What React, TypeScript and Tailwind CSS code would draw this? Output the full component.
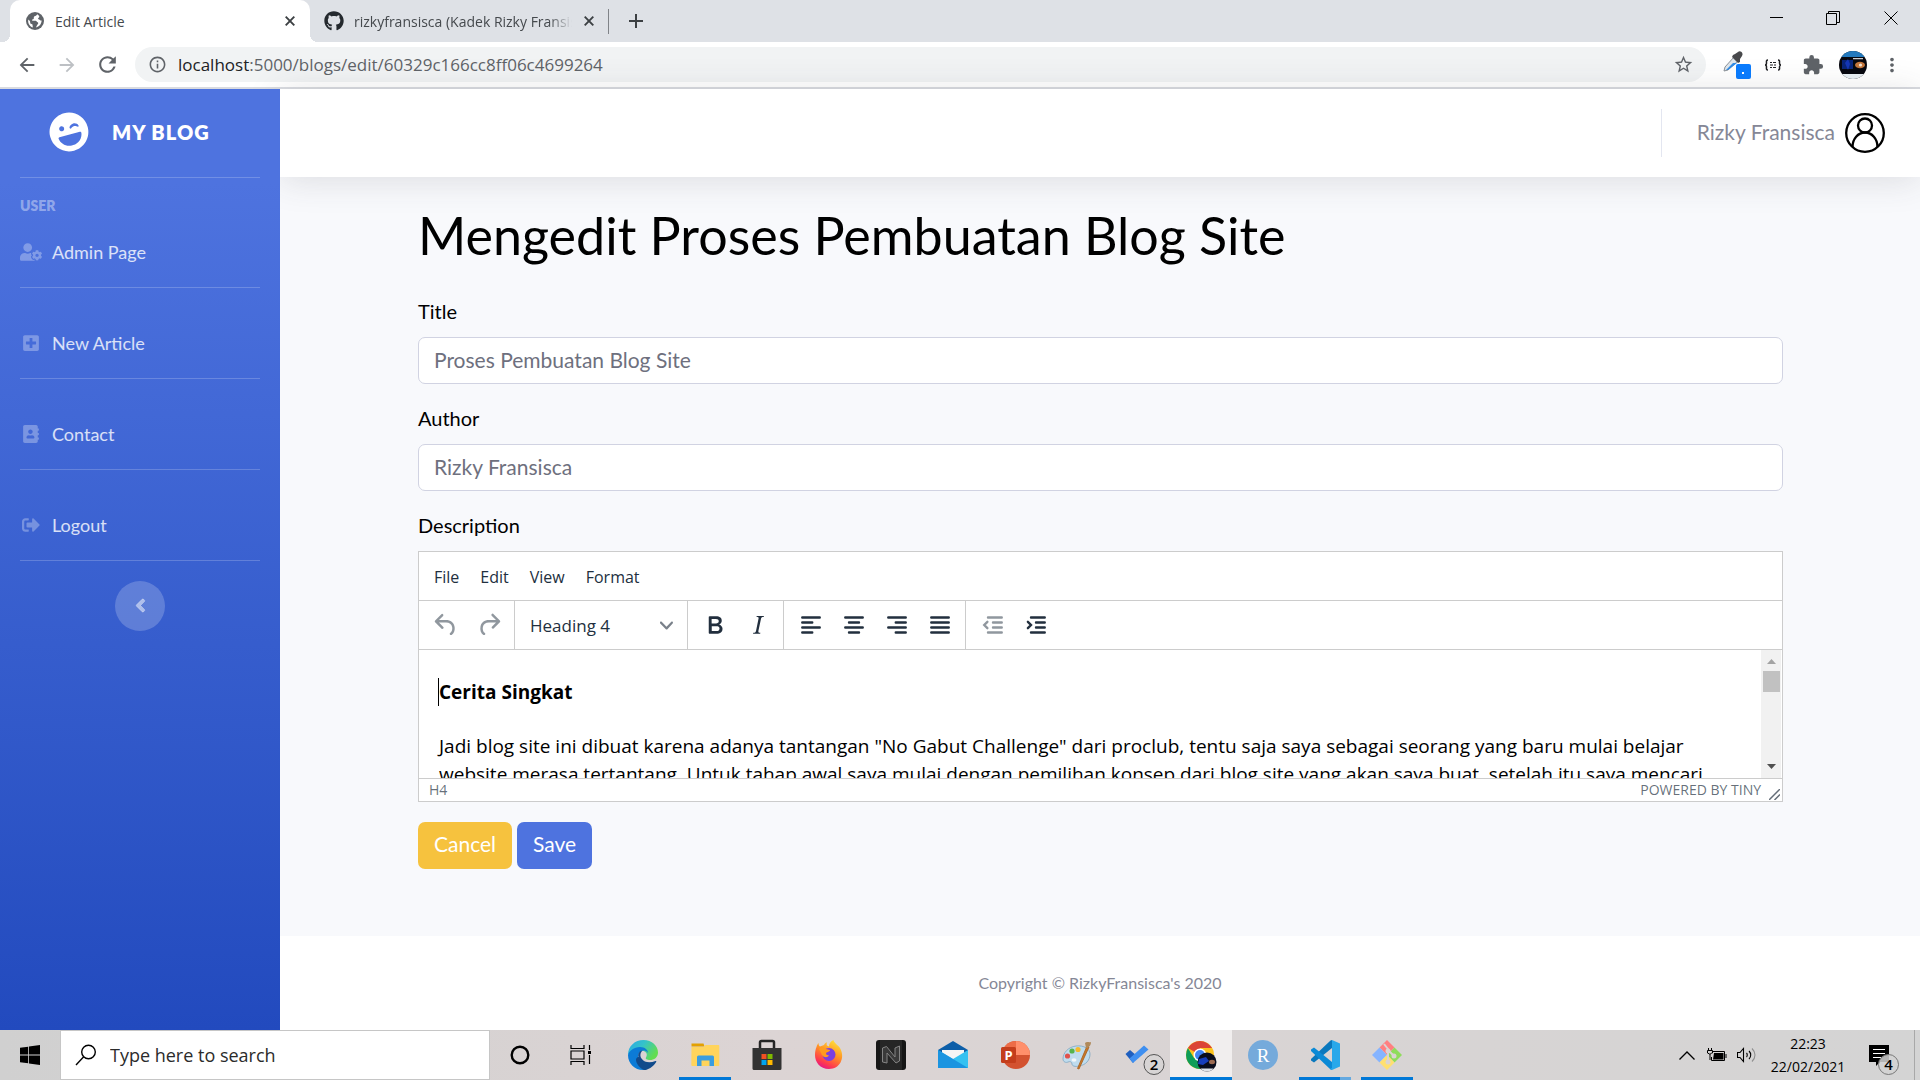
import type { ReactNode } from "react";
import {
  FaAddressBook,
  FaAngleLeft,
  FaGithub,
  FaLaughWink,
  FaPlusSquare,
  FaSignOutAlt,
  FaUserCog,
} from "react-icons/fa";
import {
  MdArrowBack,
  MdArrowForward,
  MdExtension,
  MdInfoOutline,
  MdMoreVert,
  MdRefresh,
  MdStarBorder,
} from "react-icons/md";

/* ---------- Browser chrome ---------- */

function CloseGlyph() {
  return (
    <svg viewBox="0 0 10 10" className="size-[10px]" stroke="#3c4043" strokeWidth="1.9">
      <path d="M.7.7l8.6 8.6M9.3.7L.7 9.3" />
    </svg>
  );
}

function GlobeIcon() {
  return (
    <svg viewBox="0 0 18 18" className="size-[18px] shrink-0">
      <circle cx="9" cy="9" r="9" fill="#5f6368" />
      <path
        d="M11.500 2.200c-1 .3-1 1.600-2.300 1.800-1.200.2-1.400 1-1.400 1.900 0 1-.3 1.400-1.300 1.500-.9.1-.6 1.200.2 1.300h3c1 .1 1 1.300 1.900 1.600.8.3.8 1.400.1 2-.9.700-.9 2-1.800 3.100 3.400-.6 5.700-3.500 5.700-6.800-.8 0-1.600-.3-2-.9-.4-.6-1.400-.2-1.500-1-.1-.9 1.200-1.200 1.200-2.200 0-.8-.9-1.300-1.800-2.300zM2.300 7.600c-.7 3.400 1.100 6.800 4.400 7.900.4-.8-.2-1.500-.1-2.300.1-.9-.9-1.200-1.700-1.400-.9-.2-.6-1.300-.8-2-.2-.9-1.100-1.400-1.800-2.200z"
        fill="#fff"
      />
    </svg>
  );
}

function TabStrip() {
  return (
    <div className="flex h-[42px] items-stretch bg-[#dee1e6] pl-[10px]">
      <div className="relative flex w-[300px] items-center rounded-t-[10px] bg-white pr-3 pl-4">
        <span className="absolute bottom-0 -left-2 size-2 bg-[radial-gradient(circle_at_0_0,#dee1e6_8px,white_8px)]" />
        <span className="absolute -right-2 bottom-0 size-2 bg-[radial-gradient(circle_at_100%_0,#dee1e6_8px,white_8px)]" />
        <GlobeIcon />
        <span className="ml-[11px] flex-1 text-[14px] text-[#45494d]">Edit Article</span>
        <button aria-label="Close tab" className="p-[3px]">
          <CloseGlyph />
        </button>
      </div>
      <div className="flex items-center pl-[14px]">
        <FaGithub className="size-5 shrink-0 text-[#24292e]" />
        <span className="ml-[10px] w-[219px] overflow-hidden text-[14px] whitespace-nowrap text-[#45494d] [mask-image:linear-gradient(to_right,black_195px,transparent_218px)]">
          rizkyfransisca (Kadek Rizky Fransisca)
        </span>
        <button aria-label="Close tab" className="ml-2 p-[3px]">
          <CloseGlyph />
        </button>
        <span className="ml-[11px] h-[25px] w-px bg-[#808388]" />
        <button aria-label="New tab" className="ml-5">
          <svg viewBox="0 0 14 14" className="size-[14px]" stroke="#3c4043" strokeWidth="2">
            <path d="M7 0v14M0 7h14" />
          </svg>
        </button>
      </div>
      <div className="ml-auto flex items-start pt-[11px] pr-[22px]">
        <button aria-label="Minimize" className="mr-[42px]">
          <svg viewBox="0 0 14 14" className="size-[14px]" stroke="#000">
            <path d="M0 6.500h13" />
          </svg>
        </button>
        <button aria-label="Restore" className="mr-[44px]">
          <svg viewBox="0 0 14 14" className="size-[14px]" fill="none" stroke="#000">
            <path d="M.5 2.500h10v11H.5zM2.500 2V.5h11v11H11" />
          </svg>
        </button>
        <button aria-label="Close">
          <svg viewBox="0 0 14 14" className="size-[14px]" stroke="#000">
            <path d="M.5.5l13 13M13.500.5l-13 13" />
          </svg>
        </button>
      </div>
    </div>
  );
}

function ProfilePhoto({ className }: { className: string }) {
  return (
    <svg viewBox="0 0 28 28" className={className}>
      <defs>
        <clipPath id="photo">
          <circle cx="14" cy="14" r="14" />
        </clipPath>
      </defs>
      <g clipPath="url(#photo)">
        <path fill="#07080f" d="M0 0h28v28H0z" />
        <path fill="#2379bd" d="M0 0h28v6H0z" />
        <path fill="#0b2f9e" d="M3 9h11v9H3z" opacity=".75" />
        <path fill="#1b3fd0" d="M6 12l3-4 2 5-2 6z" opacity=".7" />
        <ellipse cx="21" cy="14" rx="5" ry="3.200" fill="#c4763c" />
        <circle cx="21.500" cy="14" r="1.600" fill="#f4e8d8" />
        <path fill="#fff" d="M14 7h10v1.200H14z" opacity=".8" />
        <path fill="#e9f0f5" d="M0 23h28v5H0z" />
      </g>
    </svg>
  );
}

function AddressBar() {
  return (
    <div className="flex h-[47px] items-center border-b-2 border-[#d9dbe0] bg-white pr-[17px] pl-4 text-[#5f6368]">
      <button aria-label="Back">
        <MdArrowBack className="size-[22px]" />
      </button>
      <button aria-label="Forward" className="ml-[18px] text-[#bdc0c4]">
        <MdArrowForward className="size-[22px]" />
      </button>
      <button aria-label="Reload" className="ml-[17px]">
        <MdRefresh className="size-[25px]" />
      </button>
      <div className="ml-[15px] flex h-[35px] flex-1 items-center rounded-full bg-[#f1f3f4] pr-[12px] pl-[13px]">
        <MdInfoOutline className="size-[19px]" />
        <span className="ml-[11px] flex-1 text-[17px] leading-6">
          <span className="text-[#202124]">localhost</span>:5000/blogs/edit/60329c166cc8ff06c4699264
        </span>
        <button aria-label="Bookmark this page">
          <MdStarBorder className="size-[21px]" />
        </button>
      </div>
      <button aria-label="Color picker extension" className="ml-[17px]">
        <svg viewBox="0 0 28 28" className="size-7">
          <path d="M1 20l1-4 9-10 4 4-10 9z" fill="#dfe6ec" stroke="#8b9298" strokeWidth="1" />
          <path d="M3 19l7-7h4l-9 7z" fill="#2f8be6" />
          <path d="M10 4l2-1 3-2c2-2 6 1 4 4l-2 3 0 3-2 1-6-6z" fill="#48494c" />
          <rect x="13" y="13" width="15" height="15" rx="2" fill="#0a7cff" />
          <rect x="19" y="21" width="2" height="2" fill="#fff" />
        </svg>
      </button>
      <button aria-label="JSON extension" className="ml-[13px] text-[#202124]">
        <svg viewBox="0 0 18 12" className="h-3 w-[18px]" fill="none" stroke="currentColor">
          <path strokeWidth="1.500" d="M4 1C2 1 2.500 3 2.500 4S2 6 1 6c1 0 1.500 1 1.500 2S2 11 4 11M14 1c2 0 1.500 2 1.500 3S16 6 17 6c-1 0-1.500 1-1.500 2s.5 3-1.500 3" />
          <path d="M6 3.500h2m1 0h3M6 6h3m1 0h2M6 8.500h2m1 0h3" />
        </svg>
      </button>
      <button aria-label="Extensions" className="ml-[20px]">
        <MdExtension className="size-[22px]" />
      </button>
      <button aria-label="Profile" className="ml-[15px]">
        <ProfilePhoto className="size-7" />
      </button>
      <button aria-label="Menu" className="ml-[14px]">
        <MdMoreVert className="size-[22px]" />
      </button>
    </div>
  );
}

/* ---------- Site ---------- */

function Divider() {
  return <hr className="mx-5 border-t border-white/20" />;
}

function NavItem({ icon, label }: { icon: ReactNode; label: string }) {
  return (
    <a href="#" className="flex items-center px-5 text-[18px] leading-[30px] text-white/80">
      <span className="mr-[10px] flex w-[22px] justify-center text-[18px] text-white/30">{icon}</span>
      {label}
    </a>
  );
}

function Sidebar() {
  return (
    <nav className="relative z-10 w-[280px] shrink-0 bg-linear-180 from-[#4e73df] from-10% to-[#224abe]">
      <a href="#" className="flex h-[88px] items-center pb-[2px] pl-[49px] text-white">
        <FaLaughWink className="size-10 -rotate-[15deg]" />
        <span className="ml-[23px] text-[20px] font-extrabold tracking-wider">MY BLOG</span>
      </a>
      <Divider />
      <div className="mt-[18px] px-5 text-[14px] leading-5 font-extrabold text-white/40">USER</div>
      <div className="mt-[21px] mb-5">
        <NavItem icon={<FaUserCog className="size-[22px] shrink-0" />} label="Admin Page" />
      </div>
      <Divider />
      <div className="mt-[40px] mb-5">
        <NavItem icon={<FaPlusSquare />} label="New Article" />
      </div>
      <Divider />
      <div className="mt-[40px] mb-5">
        <NavItem icon={<FaAddressBook />} label="Contact" />
      </div>
      <Divider />
      <div className="mt-[40px] mb-5">
        <NavItem icon={<FaSignOutAlt />} label="Logout" />
      </div>
      <Divider />
      <button
        aria-label="Toggle sidebar"
        className="mx-auto mt-5 flex size-[50px] items-center justify-center rounded-full bg-white/20 pb-[2px] text-white/50"
      >
        <FaAngleLeft className="size-[21px]" stroke="currentColor" strokeWidth="16" />
      </button>
    </nav>
  );
}

function Topbar() {
  return (
    <header className="relative flex h-[88px] items-center justify-end bg-white pr-[35px] shadow-[0_3px_35px_rgba(58,59,69,0.15)]">
      <div className="h-12 w-px bg-[#e3e6f0]" />
      <a href="#" className="ml-[35px] flex items-center gap-[10px] text-[21px] text-[#858796]">
        <span className="pb-[2px]">Rizky Fransisca</span>
        <svg viewBox="0 0 40 40" className="size-10" fill="none" stroke="#000" strokeWidth="2.300">
          <circle cx="20" cy="20" r="18.800" />
          <circle cx="20" cy="12.500" r="7" />
          <path d="M7.500 34c0-8 5.500-14.500 12.500-14.500S32.500 26 32.500 34" />
        </svg>
      </a>
    </header>
  );
}

function Field({ id, label, value }: { id: string; label: string; value: string }) {
  return (
    <div className="mb-5">
      <label htmlFor={id} className="mb-3 block text-[20px] leading-7 text-black">
        {label}
      </label>
      <input
        id={id}
        type="text"
        placeholder={value}
        className="block h-[47px] w-full rounded-[7px] border border-[#d1d3e2] bg-white px-[15px] pb-[3px] text-[21px] placeholder:text-[#6e707e]"
      />
    </div>
  );
}

function ToolButton({ label, muted, children }: { label: string; muted?: boolean; children: ReactNode }) {
  return (
    <button
      type="button"
      aria-label={label}
      className={`flex h-[42px] w-[43px] items-center justify-center ${muted ? "text-[#222f3e]/50" : "text-[#222f3e]"}`}
    >
      <svg viewBox="0 0 24 24" className="size-[30px]" fill="currentColor" fillRule="evenodd">
        {children}
      </svg>
    </button>
  );
}

function Lines({ d }: { d: string }) {
  return <path d={d} fill="none" stroke="currentColor" strokeWidth="1.900" strokeLinecap="round" />;
}

function ToolGroup({ children }: { children: ReactNode }) {
  return <div className="flex items-center border-r border-[#ccc] pr-1 pl-[5px] last:border-r-0">{children}</div>;
}

function Editor() {
  return (
    <div className="border border-[#ccc] bg-white font-['Open_Sans',sans-serif] text-[#222f3e]">
      <div className="flex h-[49px] items-center gap-[21px] border-b border-[#ccc] pt-[2px] pl-[15px] text-[16px]">
        <button type="button">File</button>
        <button type="button">Edit</button>
        <button type="button">View</button>
        <button type="button">Format</button>
      </div>
      <div className="flex h-[49px] border-b border-[#ccc]">
        <ToolGroup>
          <ToolButton label="Undo" muted>
            <path d="M6.4 8H12c3.700 0 6.200 2 6.800 5.100.6 2.700-.4 5.600-2.300 6.800a1 1 0 01-1-1.800c1.100-.6 1.800-2.700 1.400-4.600-.5-2.100-2.100-3.500-4.900-3.500H6.400l3.300 3.300a1 1 0 11-1.400 1.400l-5-5a1 1 0 010-1.400l5-5a1 1 0 011.400 1.400L6.400 8z" />
          </ToolButton>
          <ToolButton label="Redo" muted>
            <path d="M17.600 10H12c-2.800 0-4.400 1.400-4.900 3.500-.4 2 .3 4 1.400 4.600a1 1 0 11-1 1.800c-2-1.200-2.900-4.100-2.300-6.800.6-3 3-5.100 6.800-5.100h5.600l-3.300-3.300a1 1 0 111.400-1.400l5 5a1 1 0 010 1.400l-5 5a1 1 0 01-1.400-1.400l3.300-3.300z" />
          </ToolButton>
        </ToolGroup>
        <ToolGroup>
          <div className="relative flex items-center">
            <select
              aria-label="Block format"
              className="h-[42px] w-[163px] appearance-none bg-transparent pt-[2px] pl-[10px] text-[17px]"
            >
              <option>Heading 4</option>
            </select>
            <svg viewBox="0 0 10 10" className="pointer-events-none absolute right-[10px] size-[13px]" fill="#222f3e" opacity=".6">
              <path d="M8.700 2.200c.3-.3.8-.3 1 0 .4.4.4.900 0 1.200L5.700 7.800c-.3.3-.900.3-1.200 0L.2 3.400a.8.8 0 010-1.200c.3-.3.8-.3 1.100 0L5 6l3.700-3.800z" />
            </svg>
          </div>
        </ToolGroup>
        <ToolGroup>
          <ToolButton label="Bold">
            <path d="M7.800 19c-.3 0-.5 0-.6-.2l-.2-.5V5.700c0-.2 0-.4.2-.5l.6-.2h5c1.500 0 2.700.3 3.500 1 .7.6 1.100 1.400 1.100 2.500a3 3 0 01-.6 1.900c-.4.6-1 1-1.600 1.200.4.1.9.3 1.300.6s.8.7 1 1.200c.4.4.5 1 .5 1.600 0 1.300-.4 2.300-1.300 3-.8.7-2.100 1-3.800 1H7.800zm5-8.300c.6 0 1.200-.1 1.600-.5.4-.3.6-.7.6-1.300 0-1.100-.8-1.700-2.300-1.700H9.300v3.500h3.400zm.5 6c.7 0 1.300-.1 1.700-.4.4-.4.6-.9.6-1.500s-.2-1-.7-1.400c-.4-.3-1-.4-2-.4H9.400v3.800h4z" />
          </ToolButton>
          <ToolButton label="Italic">
            <path d="M16.700 4.700l-.1.9h-.3c-.6 0-1 0-1.400.3-.3.3-.4.6-.5 1.100l-2.100 9.800v.6c0 .5.4.8 1.400.8h.2l-.2.8H8l.2-.8h.2c1.100 0 1.800-.5 2-1.500l2-9.800.1-.5c0-.6-.4-.8-1.400-.8h-.3l.2-.9h5.800z" />
          </ToolButton>
        </ToolGroup>
        <ToolGroup>
          <ToolButton label="Align left">
            <Lines d="M5 6h14M5 10h8M5 14h14M5 18h8" />
          </ToolButton>
          <ToolButton label="Align center">
            <Lines d="M5 6h14M8 10h8M5 14h14M8 18h8" />
          </ToolButton>
          <ToolButton label="Align right">
            <Lines d="M5 6h14M11 10h8M5 14h14M11 18h8" />
          </ToolButton>
          <ToolButton label="Justify">
            <Lines d="M5 6h14M5 10h14M5 14h14M5 18h14" />
          </ToolButton>
        </ToolGroup>
        <ToolGroup>
          <ToolButton label="Decrease indent" muted>
            <Lines d="M8 6h11M12 10h7M12 14h7M8 18h11M7.500 9.500L5 12l2.500 2.500" />
          </ToolButton>
          <ToolButton label="Increase indent">
            <Lines d="M8 6h11M12 10h7M12 14h7M8 18h11M5.500 9.500L8 12l-2.500 2.500" />
          </ToolButton>
        </ToolGroup>
      </div>
      <div className="flex h-32 pr-px">
        <div
          role="textbox"
          aria-labelledby="description-label"
          className="flex-1 overflow-hidden px-5 text-[19px] leading-7 text-black"
        >
          <h4 className="mt-7 font-bold">
            <span className="-ml-px border-l border-black py-[1px]">Cerita Singkat</span>
          </h4>
          <p className="mt-[26px]">
            Jadi blog site ini dibuat karena adanya tantangan "No Gabut Challenge" dari proclub, tentu saja saya sebagai
            seorang yang baru mulai belajar website merasa tertantang. Untuk tahap awal saya mulai dengan pemilihan
            konsep dari blog site yang akan saya buat, setelah itu saya mencari
          </p>
        </div>
        <div className="flex w-5 flex-col items-center bg-[#f1f1f1] pt-[9px] pb-[9px]">
          <svg viewBox="0 0 9 5" className="h-[5px] w-[9px]" fill="#a3a3a3">
            <path d="M0 5l4.500-5L9 5z" />
          </svg>
          <div className="mt-[7px] h-[21px] w-[17px] bg-[#c1c1c1]" />
          <svg viewBox="0 0 9 5" className="mt-auto h-[5px] w-[9px]" fill="#505050">
            <path d="M0 0l4.500 5L9 0z" />
          </svg>
        </div>
      </div>
      <div className="flex h-[23px] items-center border-t border-[#ccc] pr-[2px] pl-[10px] text-[14px] leading-5 text-[#222f3e]/70">
        <span className="flex-1">H4</span>
        <a href="#">POWERED BY TINY</a>
        <svg viewBox="0 0 10 10" className="mt-2 ml-[8px] size-[11px]" stroke="currentColor" strokeWidth="1.300">
          <path d="M0 10L10 0M5 10l5-5" />
        </svg>
      </div>
    </div>
  );
}

function Site() {
  return (
    <div className="flex flex-1 font-[Lato,sans-serif]">
      <Sidebar />
      <div className="flex flex-1 flex-col bg-[#f8f9fc]">
        <Topbar />
        <main className="mr-[137px] ml-[138px] flex-1">
          <h1 className="mt-7 mb-8 text-[52px] leading-[60px] text-black">Mengedit Proses Pembuatan Blog Site</h1>
          <form onSubmit={(e) => e.preventDefault()}>
            <Field id="title" label="Title" value="Proses Pembuatan Blog Site" />
            <Field id="author" label="Author" value="Rizky Fransisca" />
            <div id="description-label" className="mb-3 text-[20px] leading-7 text-black">
              Description
            </div>
            <Editor />
            <div className="mt-5 flex gap-[5px] text-[21px] text-white">
              <button type="button" className="h-[47px] rounded-[7px] bg-[#f6c23e] px-4 pb-1">
                Cancel
              </button>
              <button type="submit" className="h-[47px] rounded-[7px] bg-[#4e73df] px-4 pb-1">
                Save
              </button>
            </div>
          </form>
        </main>
        <footer className="bg-white pt-[38px] pb-[39px] text-center text-[16px] leading-[17px] text-[#858796]">
          Copyright © RizkyFransisca's 2020
        </footer>
      </div>
    </div>
  );
}

/* ---------- Taskbar ---------- */

const taskIcons: { name: string; state?: "open" | "active" | "grouped"; art: ReactNode }[] = [
  {
    name: "Microsoft Edge",
    art: (
      <>
        <defs>
          <linearGradient id="edgeTop" x1="0" y1="0" x2="1" y2=".5">
            <stop offset="0" stopColor="#2aa7e8" />
            <stop offset=".5" stopColor="#35c3c9" />
            <stop offset="1" stopColor="#63dd51" />
          </linearGradient>
        </defs>
        <path d="M0 15C0 6 7 0 15.500 0 24 0 30 6 30 12.500c0 5-4 7.500-8 7.500-3 0-5-1-4-2.500 2.500-4-1-7-5-7C7 10.500 1 13 0 15z" fill="url(#edgeTop)" />
        <path d="M0 15c1-4 6-8 12-8 5 0 8 3 8 6-1-2-3-2.500-4.500-2.500-4 0-6 4-5 8.500 1 5.500 5 9.500 8.500 10.600C9 32 0 25 0 15z" fill="#0c7bd6" />
        <path d="M10.500 17c-1-3 1-6.500 4-6.500-2 2-3 5-1 8 3 4.500 9 4.500 14 2.500 1 0 1 .5.500 1.200C25 27 20 30 16 30c-4-2-8-6-8-10.500 0-1 1-2.500 2.500-2.500z" fill="#114a8b" />
      </>
    ),
  },
  {
    name: "File Explorer",
    state: "open",
    art: (
      <>
        <path d="M1.500 3.500h12l1 3h-13z" fill="#e3a000" />
        <path d="M1.500 7h12l2-2h13a.8.8 0 01.8.8V25a1 1 0 01-1 1h-26a1 1 0 01-1-1z" fill="#ffd45c" />
        <path d="M7 26V17a1.500 1.500 0 011.500-1.500h14A1.500 1.500 0 0124 17v9h-4.500v-5.500h-8V26z" fill="#3a9de0" />
      </>
    ),
  },
  {
    name: "Microsoft Store",
    art: (
      <>
        <path d="M8 9V2.500A1.500 1.500 0 019.500 1h11A1.500 1.500 0 0122 2.500V9" fill="none" stroke="#252525" strokeWidth="2.500" />
        <path d="M.5 8h29v20.500a1.500 1.500 0 01-1.500 1.500H2a1.500 1.500 0 01-1.500-1.500z" fill="#333" />
        <path d="M9.500 14h5v5h-5z" fill="#f25022" />
        <path d="M15.500 14h5v5h-5z" fill="#7fba00" />
        <path d="M9.500 20h5v5h-5z" fill="#00a4ef" />
        <path d="M15.500 20h5v5h-5z" fill="#ffb900" />
      </>
    ),
  },
  {
    name: "Firefox",
    art: (
      <>
        <defs>
          <linearGradient id="fox" x1=".8" y1="0" x2=".3" y2="1">
            <stop offset="0" stopColor="#ffe83b" />
            <stop offset=".45" stopColor="#ff9324" />
            <stop offset=".8" stopColor="#ff3b4d" />
            <stop offset="1" stopColor="#e2158b" />
          </linearGradient>
        </defs>
        <path d="M2.500 7C3 5 4 3.500 4.500 3c0 2 .5 3 1.500 3.500L10 5c1-2 2-2.500 3-2.500-.5 1-.5 2.500 0 3l2 1c0-3 2-5.500 4.500-6.500 0 3 5 5 7 9C31 18 26 29 15 29 6 29 1 22 1 15c0-3 .5-6 1.500-8z" fill="url(#fox)" />
        <circle cx="15" cy="14.500" r="6.500" fill="#7b3fe0" />
        <path d="M5 9c3-2 5-1 7 0l4 1c0 2-4 2-4 3.500s2 2 3 1.500c-1 3-5 3-7 0z" fill="#ff9a1f" />
      </>
    ),
  },
  {
    name: "Nox",
    art: (
      <>
        <rect width="30" height="30" rx="3" fill="#161616" />
        <path d="M4 0h22v30H4z" fill="#262626" />
        <path d="M6.500 22V8l4-1.500L19 17V8l4.500-2v15L20 23l-9-10v10z" fill="#3a3a3a" stroke="#858585" strokeWidth="1" />
      </>
    ),
  },
  {
    name: "Mail",
    art: (
      <>
        <path d="M0 10L15 1l15 9v6H0z" fill="#0d5ea8" />
        <path d="M4 10h22v9H4z" fill="#f5f5f5" />
        <path d="M0 10l15 9 15-9v18H0z" fill="#35c1f1" />
        <path d="M0 10l30 18H0z" fill="#1b94e0" />
      </>
    ),
  },
  {
    name: "PowerPoint",
    art: (
      <>
        <circle cx="16" cy="15" r="14" fill="#d35230" />
        <path d="M16 1a14 14 0 0114 14H16z" fill="#ff8f6b" />
        <path d="M16 1v14H2A14 14 0 0116 1z" fill="#ed6c47" />
        <rect x="1" y="7" width="15" height="16" rx="1.500" fill="#c43e1c" />
        <text x="8.500" y="19.500" fontSize="13" fontWeight="700" fill="#fff" textAnchor="middle">
          P
        </text>
      </>
    ),
  },
  {
    name: "Paint",
    art: (
      <>
        <path d="M14 6C6 7 1 13 1 19c0 3 3 4 5 3s4 0 4 2 3 3 7 2c7-1 11-6 11-12 0-5-6-9-14-8z" fill="#bfdcee" stroke="#7ea6c2" strokeWidth=".8" />
        <circle cx="5.500" cy="16" r="2.600" fill="#e0524c" />
        <circle cx="10" cy="11" r="2.600" fill="#57b44d" />
        <circle cx="16" cy="9.500" r="2.600" fill="#f4b92e" />
        <ellipse cx="12" cy="20" rx="2.500" ry="1.800" fill="#f3f7fa" />
        <path d="M25 6l2 1-10 22-1.500-.5z" fill="#c97a2b" stroke="#a65d1a" strokeWidth=".8" />
        <path d="M23 3c2-2 4 0 6-1 0 4-3 6-5 6z" fill="#b08a5b" />
      </>
    ),
  },
  {
    name: "To Do",
    art: (
      <>
        <path d="M1.500 14l4.500-4 7 6-4 7z" fill="#1f5fbf" />
        <path d="M9 23l-3.500-4.500L20 5.500l4.500 4z" fill="#3f8ff0" />
        <circle cx="30" cy="24.500" r="10" fill="#d7d4d4" stroke="#555" strokeWidth="1" />
        <text x="30" y="30" fontSize="15" fontWeight="600" fill="#000" textAnchor="middle">
          2
        </text>
      </>
    ),
  },
  {
    name: "Google Chrome",
    state: "active",
    art: (
      <>
        <circle cx="14" cy="15" r="14" fill="#fcc31e" />
        <path d="M14 15L1.900 8A14 14 0 0126.100 8H14z" fill="#db4437" />
        <path d="M1.900 8A14 14 0 0014 29l5-9-11-2z" fill="#0f9d58" />
        <circle cx="14" cy="15" r="6.500" fill="#fff" />
        <circle cx="14" cy="15" r="5" fill="#4285f4" />
        <circle cx="21" cy="22" r="9.500" fill="#0a0d1c" />
        <path d="M13 19l7-2 3 4-6 4-5-1z" fill="#173dba" />
        <ellipse cx="26" cy="22" rx="3" ry="2.200" fill="#9c6b52" />
        <path d="M14.500 28.500h13c-3 4-10 4-13 0z" fill="#dfe3e8" />
      </>
    ),
  },
  {
    name: "RStudio",
    art: (
      <>
        <circle cx="15" cy="15" r="15" fill="#75aadb" />
        <text x="15" y="21.500" fontSize="19" fontFamily="Liberation Serif, serif" fill="#fff" textAnchor="middle">
          R
        </text>
      </>
    ),
  },
  {
    name: "Visual Studio Code",
    state: "grouped",
    art: (
      <>
        <path d="M22 0v8L4 22.500 1 20.500v-1.500L20.500.5z" fill="#0a78bd" />
        <path d="M22 30v-8L4 7.500 1 9.500V11l19.500 18.500z" fill="#0b8ad6" />
        <path d="M22 0l8 3.500v23L22 30l-2-1 2-1z" fill="#28a8ea" />
      </>
    ),
  },
  {
    name: "Git GUI",
    state: "open",
    art: (
      <>
        <path d="M15 0l7.500 7.500L15 15 7.500 7.500z" fill="#ff8080" />
        <path d="M22.500 7.500L30 15l-7.500 7.500L15 15z" fill="#8fdc5c" />
        <path d="M7.500 7.500L15 15l-7.500 7.500L0 15z" fill="#85b4ff" />
        <path d="M15 15l7.500 7.500L15 30l-7.500-7.500z" fill="#ffe070" />
        <path d="M12 4l4 5v13M16 10l6 6" fill="none" stroke="#dad4d4" strokeWidth="2" />
        <circle cx="16" cy="11" r="2.500" fill="#dad4d4" />
        <circle cx="22" cy="16" r="2.500" fill="#dad4d4" />
        <circle cx="16" cy="22" r="2.500" fill="#dad4d4" />
      </>
    ),
  },
];

function TaskButton({ name, state, art }: (typeof taskIcons)[number]) {
  return (
    <button
      aria-label={name}
      className={`relative flex w-[62px] items-center justify-center ${state === "active" ? "bg-[#f1eeee]" : ""}`}
    >
      <svg viewBox="0 0 30 30" className="size-[30px] overflow-visible">
        {art}
      </svg>
      {state === "active" && <span className="absolute inset-x-0 bottom-0 h-[3px] bg-[#0078d7]" />}
      {state === "open" && <span className="absolute inset-x-[5px] bottom-0 h-[3px] bg-[#0078d7]" />}
      {state === "grouped" && (
        <span className="absolute inset-x-[5px] bottom-0 flex h-[3px] bg-[#65a9e0]">
          <span className="h-full w-[41px] bg-[#0078d7]" />
        </span>
      )}
    </button>
  );
}

function Taskbar() {
  return (
    <div className="flex h-[50px] items-stretch bg-linear-to-r from-[#d0d0d0] via-[#dcd4d4] via-40% to-[#d4d4d4] font-['Open_Sans',sans-serif] text-black">
      <button aria-label="Start" className="flex w-[60px] items-center justify-center">
        <svg viewBox="0 0 20 20" className="size-5" fill="#000">
          <path d="M0 2.800l8.200-1.100v7.900H0zM9 1.600L20 0v9.600H9zM0 10.400h8.200v7.900L0 17.200zM9 10.400h11V20L9 18.400z" />
        </svg>
      </button>
      <label className="flex w-[430px] items-center border border-[#c6c6c6] bg-white pl-[14px]">
        <svg viewBox="0 0 22 22" className="size-[22px]" fill="none" stroke="#000" strokeWidth="1.400">
          <circle cx="13.500" cy="8" r="6.800" />
          <path d="M8.700 12.800L1 21" />
        </svg>
        <input
          type="text"
          aria-label="Search"
          placeholder="Type here to search"
          className="ml-[13px] flex-1 text-[18px] placeholder:text-[#2b2b2b]"
        />
      </label>
      <button aria-label="Cortana" className="flex w-[60px] items-center justify-center">
        <svg viewBox="0 0 20 20" className="size-5" fill="none" stroke="#000" strokeWidth="2.400">
          <circle cx="10" cy="10" r="8.300" />
        </svg>
      </button>
      <button aria-label="Task view" className="flex w-[62px] items-center justify-center">
        <svg viewBox="0 0 22 20" className="h-5 w-[22px]" fill="none" stroke="#000" strokeWidth="1.200">
          <path d="M1 0v3.500h13V0M1 20v-3.500h13V20M1 6h13v8H1zM19.500 0v5M19.500 10v9" />
          <path d="M18 6h3v3h-3z" fill="#000" stroke="none" />
        </svg>
      </button>
      {taskIcons.map((t) => (
        <TaskButton key={t.name} {...t} />
      ))}
      <div className="ml-auto flex items-center">
        <button aria-label="Show hidden icons">
          <svg viewBox="0 0 16 9" className="h-[9px] w-4" fill="none" stroke="#000" strokeWidth="1.300">
            <path d="M.5 8.500L8 1l7.500 7.500" />
          </svg>
        </button>
        <svg viewBox="0 0 20 14" className="ml-3 h-[14px] w-5" fill="none" stroke="#000">
          <path d="M6 3.500h11.500v9H4.500V9M19 6v4" />
          <path d="M7 5h9.500v6.500H6z" fill="#000" stroke="none" />
          <path d="M1.500 0v2.500M4.500 0v2.500M.5 2.500h5v2.500h-1L3.500 6h-1L.5 5zM3 6v6" />
        </svg>
        <svg viewBox="0 0 20 16" className="ml-[10px] h-4 w-5" fill="none" stroke="#000" strokeWidth="1.100">
          <path d="M.5 5.500H3l3.500-4v13l-3.500-4H.5zM9.500 6c1 1 1 3 0 4M12 4c2.300 2.300 2.300 5.700 0 8" />
          <path d="M15 1.500c4 4 4 9 0 13" stroke="#8f8f8f" />
        </svg>
        <div className="ml-3 w-[78px] text-center text-[14px] leading-[23px]">
          <div>22:23</div>
          <div>22/02/2021</div>
        </div>
        <button aria-label="Notifications" className="mt-[10px] ml-[22px]">
          <svg viewBox="0 0 30 30" className="size-[30px]">
            <path d="M0 0h20v17h-9l-4 4v-4H0z" fill="#000" />
            <path d="M4 4.500h12M4 8.500h12M4 12.500h8" stroke="#fff" strokeWidth="1.200" />
            <circle cx="19.500" cy="19.500" r="10" fill="#d2d2d2" fillOpacity=".85" stroke="#777" />
            <text x="19.500" y="25" fontSize="15" fontWeight="600" textAnchor="middle">
              4
            </text>
          </svg>
        </button>
        <span className="ml-[15px] h-[50px] w-px bg-[#a8a8a8]" />
        <span className="w-[5px]" />
      </div>
    </div>
  );
}

export default function App() {
  return (
    <div className="flex min-h-screen flex-col bg-white font-['Open_Sans',sans-serif]">
      <TabStrip />
      <AddressBar />
      <Site />
      <Taskbar />
    </div>
  );
}
